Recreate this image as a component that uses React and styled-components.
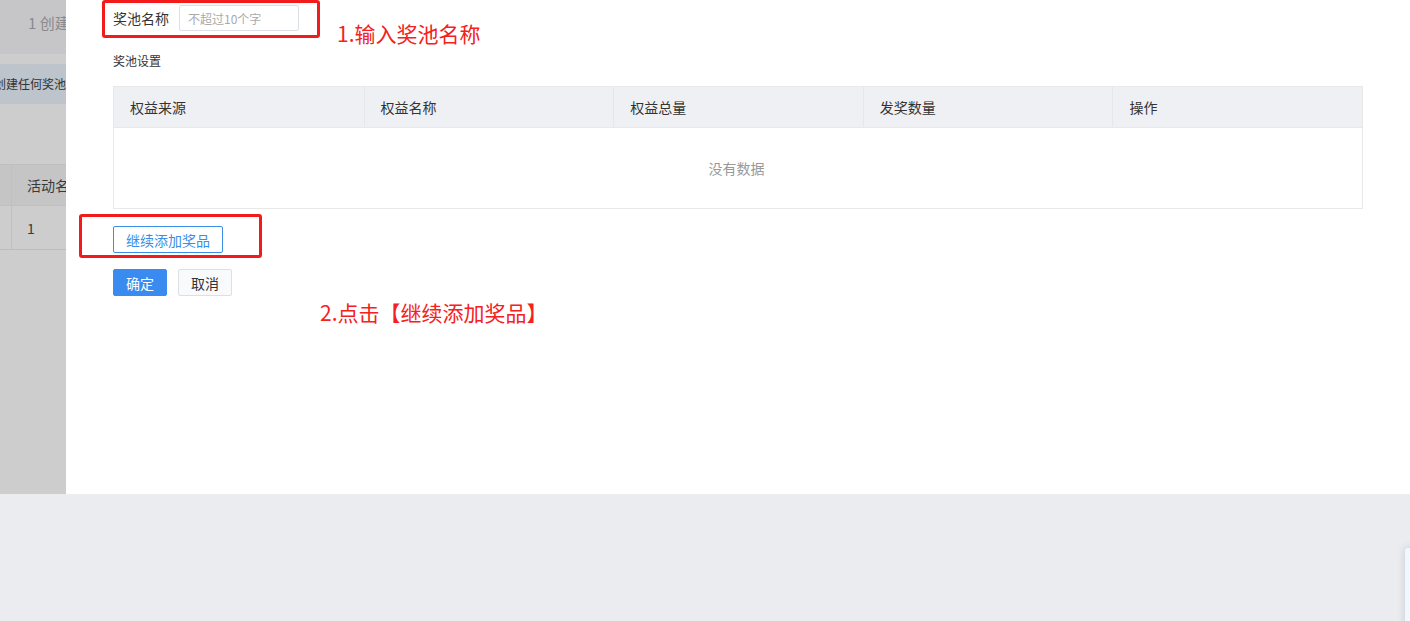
import React from "react";
import styled, { createGlobalStyle } from "styled-components";

const GlobalStyle = createGlobalStyle`
  html, body {
    margin: 0;
    padding: 0;
    background: #ebecf0;
    font-family: "Noto Sans CJK SC", "Liberation Sans", sans-serif;
  }
`;

const Page = styled.div`
  width: 1410px;
  height: 621px;
  background: #ebecf0;
  position: relative;
  overflow: hidden;
`;

const Top = styled.div`
  display: grid;
  grid-template-columns: 66px 1fr;
  height: 494px;
`;

const Backdrop = styled.div`
  background: #cdcdcd;
  overflow: hidden;
  display: flex;
  flex-direction: column;
`;

const Steps = styled.div`
  height: 54px;
  background: #c6c6c8;
  color: #8a8a8c;
  font-size: 15px;
  padding: 12px 0 0 28px;
  box-sizing: border-box;
  white-space: nowrap;
`;

const Notice = styled.div`
  margin-top: 10px;
  height: 40px;
  background: #bec4cc;
  color: #333;
  font-size: 12px;
  line-height: 40px;
  white-space: nowrap;
  text-indent: -6px;
`;

const BgTable = styled.div`
  margin-top: 60px;
  border-bottom: 1px solid #bdbdbd;
`;

const BgRow = styled.div`
  display: grid;
  grid-template-columns: 11px 1fr;
  height: ${p => p.h}px;
  background: ${p => p.bg};
  border-top: 1px solid #c0c0c0;
  box-sizing: border-box;
`;

const BgCell = styled.div`
  border-left: ${p => (p.first ? "none" : "1px solid #c0c0c0")};
  color: #3a3a3a;
  font-size: 14px;
  display: flex;
  align-items: center;
  padding-left: 15px;
  white-space: nowrap;
`;

const Drawer = styled.div`
  background: #fff;
  position: relative;
  padding: 5px 47px 0 47px;
  box-sizing: border-box;
`;

const FieldRow = styled.div`
  display: flex;
  align-items: center;
  gap: 10px;
  height: 26px;
`;

const Label = styled.span`
  font-size: 14px;
  color: #333;
`;

const Input = styled.input`
  width: 120px;
  height: 26px;
  box-sizing: border-box;
  border: 1px solid #dcdfe6;
  border-radius: 2px;
  padding: 0 8px;
  font-size: 12px;
  font-family: inherit;
  outline: none;
  &::placeholder {
    color: #aaa;
  }
`;

const Section = styled.div`
  font-size: 12px;
  color: #333;
  margin-top: 21px;
  line-height: 18px;
`;

const Table = styled.div`
  margin-top: 16px;
  border: 1px solid #e8e8e8;
  width: 1250px;
  box-sizing: border-box;
`;

const Head = styled.div`
  display: grid;
  grid-template-columns: repeat(5, 1fr);
  height: 40px;
  background: #eff0f4;
  border-bottom: 1px solid #e8e8e8;
`;

const Th = styled.div`
  font-size: 14px;
  color: #333;
  display: flex;
  align-items: center;
  padding-left: 16px;
  border-left: ${p => (p.first ? "none" : "1px solid #e6e7eb")};
`;

const Empty = styled.div`
  height: 80px;
  display: flex;
  align-items: center;
  justify-content: center;
  font-size: 14px;
  color: #999;
  padding-right: 3px;
`;

const AddRow = styled.div`
  margin-top: 17px;
`;

const Button = styled.button`
  height: 27px;
  padding: 0 12px;
  font-size: 14px;
  font-family: inherit;
  border-radius: 2px;
  border: 1px solid ${p => (p.primary ? "#3a8bf0" : p.outline ? "#3a8ee6" : "#dcdfe6")};
  background: ${p => (p.primary ? "#3a8bf0" : p.outline ? "#fff" : "#f9fafb")};
  color: ${p => (p.primary ? "#fff" : p.outline ? "#3a8ee6" : "#333")};
  cursor: pointer;
`;

const Actions = styled.div`
  display: flex;
  gap: 11px;
  margin-top: 16px;
`;

const RedBox = styled.div`
  position: absolute;
  border: 3px solid #f21a1a;
  border-radius: 3px;
  box-sizing: border-box;
  pointer-events: none;
`;

const Note = styled.div`
  position: absolute;
  color: #f52020;
  font-size: 21px;
  white-space: nowrap;
  line-height: 24px;
`;

const Corner = styled.div`
  position: absolute;
  left: 1405px;
  top: 548px;
  width: 20px;
  height: 80px;
  background: #f1f7ff;
  border-radius: 3px;
  box-shadow: 0 0 8px rgba(0, 0, 0, 0.15);
`;

export default function App() {
  const cols = ["权益来源", "权益名称", "权益总量", "发奖数量", "操作"];
  return (
    <Page>
      <GlobalStyle />
      <Top>
        <Backdrop>
          <Steps>1 创建</Steps>
          <Notice>创建任何奖池</Notice>
          <BgTable>
            <BgRow h={41} bg="#c5c5c5">
              <BgCell first />
              <BgCell>活动名</BgCell>
            </BgRow>
            <BgRow h={44} bg="#cdcdcd">
              <BgCell first />
              <BgCell>1</BgCell>
            </BgRow>
          </BgTable>
        </Backdrop>
        <Drawer>
          <FieldRow>
            <Label>奖池名称</Label>
            <Input placeholder="不超过10个字" />
          </FieldRow>
          <Section>奖池设置</Section>
          <Table>
            <Head>
              {cols.map((c, i) => (
                <Th key={c} first={i === 0}>{c}</Th>
              ))}
            </Head>
            <Empty>没有数据</Empty>
          </Table>
          <AddRow>
            <Button outline>继续添加奖品</Button>
          </AddRow>
          <Actions>
            <Button primary>确定</Button>
            <Button>取消</Button>
          </Actions>

          <RedBox style={{ left: 36, top: 0, width: 218, height: 38 }} />
          <Note style={{ left: 271, top: 21 }}>1.输入奖池名称</Note>
          <RedBox style={{ left: 13, top: 214, width: 183, height: 44 }} />
          <Note style={{ left: 254, top: 300 }}>2.点击【继续添加奖品】</Note>
        </Drawer>
      </Top>
      <Corner />
    </Page>
  );
}
